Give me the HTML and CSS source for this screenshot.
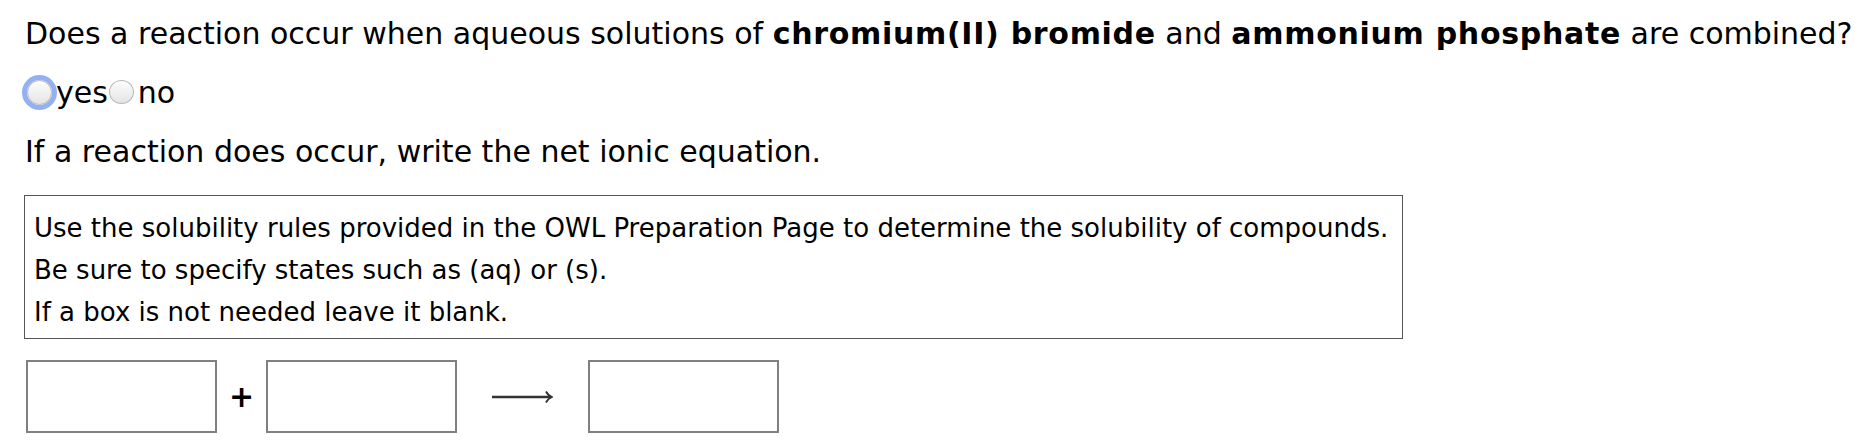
FILE: index.html
```html
<!DOCTYPE html>
<html>
<head>
<meta charset="utf-8">
<link rel="stylesheet" href="styles.css">
</head>
<body>
<div class="page">
  <p class="question">Does a reaction occur when aqueous solutions of <b>chromium(II) bromide</b> and <b>ammonium phosphate</b> are combined?</p>
  <div class="choices">
    <label class="choice"><span class="radio focused"></span><span class="label-text">yes</span></label>
    <label class="choice"><span class="radio"></span><span class="label-text">no</span></label>
  </div>
  <p class="prompt">If a reaction does occur, write the net ionic equation.</p>
  <div class="notes">
    <p>Use the solubility rules provided in the OWL Preparation Page to determine the solubility of compounds.</p>
    <p>Be sure to specify states such as (aq) or (s).</p>
    <p>If a box is not needed leave it blank.</p>
  </div>
  <div class="equation">
    <span class="slot"></span>
    <span class="plus">+</span>
    <span class="slot"></span>
    <svg class="arrow" width="61" height="14" viewBox="0 0 61 14"><path d="M0 7 H59" stroke="#333" stroke-width="2.4" fill="none"/><path d="M54 1.5 Q56 5.5 60 7 Q56 8.5 54 12.5" stroke="#333" stroke-width="1.8" fill="none"/></svg>
    <span class="slot"></span>
  </div>
</div>
</body>
</html>
```
FILE: styles.css
```css
html, body { margin: 0; padding: 0; background: #fff; }
.page {
  font-family: "DejaVu Sans", Verdana, sans-serif;
  color: #000;
  padding: 16px 0 0 25px;
}
.question {
  margin: 0;
  font-size: 30px;
  line-height: 36px;
  white-space: nowrap;
}
.question b { letter-spacing: 0.7px; }
.choices {
  display: flex;
  align-items: center;
  height: 40px;
  margin-top: 20px;
  font-size: 30px;
}
.choice { display: flex; align-items: center; }
.radio {
  display: inline-block;
  width: 25px;
  height: 24px;
  border-radius: 50%;
  border: 1px solid #b8b8b8;
  background: linear-gradient(#fdfdfd, #e4e4e4);
  box-sizing: border-box;
  margin-left: 1px;
  margin-right: 4px;
}
.radio.focused {
  width: 25px;
  height: 25px;
  box-shadow: 0 0 0 5px #93b0f4;
  margin-left: 2px;
  margin-right: 4px;
}
.prompt {
  margin: 22px 0 0 0;
  font-size: 30px;
  line-height: 36px;
}
.notes {
  margin-top: 25px;
  width: 1379px;
  border: 1px solid #555;
  padding: 11px 9px 5px 9px;
  box-sizing: border-box;
  margin-left: -1px;
}
.notes p {
  margin: 0;
  font-size: 26px;
  line-height: 42px;
  white-space: nowrap;
}
.equation {
  display: flex;
  align-items: center;
  margin-top: 21px;
  margin-left: 1px;
}
.slot {
  width: 191px;
  height: 73px;
  border: 2px solid #808080;
  box-sizing: border-box;
}
.plus {
  font-weight: bold;
  font-size: 30px;
  margin: 0 12px;
}
.arrow { margin: 0 35px; }
```
